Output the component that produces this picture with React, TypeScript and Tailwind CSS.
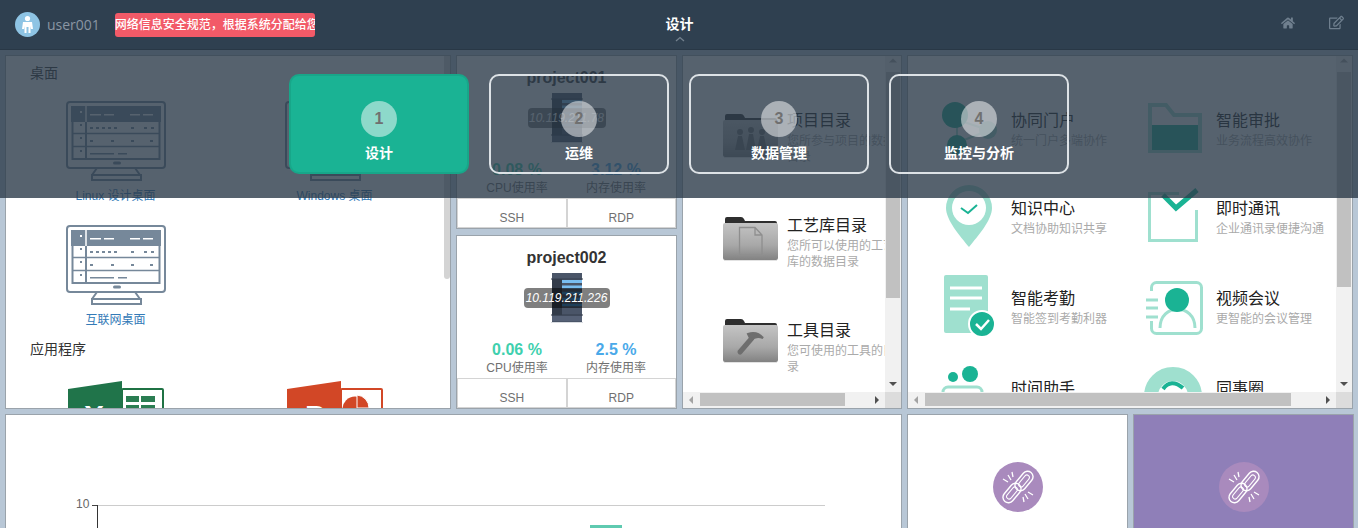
import React from "react";
import { FaHome, FaRegEdit } from "react-icons/fa";

const LIGHT = "#9fe0cf";
const DARK = "#1ab394";

function Monitor() {
  const c = "#76889a";
  return (
    <svg width="100" height="80" viewBox="0 0 100 80" className="block mx-auto">
      <rect x="1" y="1" width="98" height="66" rx="3" fill="#fff" stroke={c} strokeWidth="2" />
      <rect x="5" y="5" width="90" height="16" fill={c} />
      <rect x="6.5" y="20" width="87" height="38" fill="none" stroke={c} strokeWidth="2" />
      <path d="M6 32.5H94M6 45.5H94" stroke={c} strokeWidth="1.6" />
      <path d="M20 21V58" stroke={c} strokeWidth="2" />
      <path d="M20 5V21" stroke="#fff" strokeWidth="1.5" />
      <path d="M24 13.7H35M38 13.7H48M64 13.7H74M77 13.7H87" stroke="#fff" strokeWidth="1.5" />
      <path d="M14 24h2M14 37h2M14 50h2" stroke={c} strokeWidth="2" />
      <path d="M14 11h2" stroke="#fff" strokeWidth="2" />
      <path d="M24 27h3M30 27h3M36 27h3M42 27h3M48 27h3M65 27h3M78 27h3M85 27h3M24 40h3M45 40h3M65 40h3M84 40h3" stroke={c} strokeWidth="2" />
      <path d="M24 52.7H48M52 52.7H61" stroke={c} strokeWidth="1.5" />
      <rect x="47" y="60.5" width="8" height="3" rx="1.5" fill={c} />
      <path d="M31 67L26 74M69 67L74 74" stroke={c} strokeWidth="2" />
      <rect x="26" y="74" width="49" height="5" fill="none" stroke={c} strokeWidth="2" />
    </svg>
  );
}

function Excel() {
  return (
    <svg width="100" height="60" viewBox="0 0 100 60" className="block mx-auto">
      <rect x="56" y="8" width="41" height="52" rx="1" fill="#fff" stroke="#1f7244" strokeWidth="2" />
      <path d="M60 15h13v6H60zM75 15h14v6H75zM60 24h13v8H60zM75 24h14v8H75z" fill="#2b7d52" />
      <path d="M2 8L56 0V60H2Z" fill="#20744a" />
      <text x="28" y="45" fontFamily="Liberation Sans" fontWeight="700" fontSize="30" fill="#fff" textAnchor="middle">X</text>
    </svg>
  );
}

function Ppt() {
  return (
    <svg width="100" height="60" viewBox="0 0 100 60" className="block mx-auto">
      <rect x="56" y="8" width="41" height="52" rx="1" fill="#fff" stroke="#d24726" strokeWidth="2" />
      <circle cx="70" cy="28" r="12.5" fill="#d24726" />
      <path d="M72 14a13 13 0 0 1 12 13H72Z" fill="#d24726" stroke="#fff" strokeWidth="1" />
      <path d="M2 8L56 0V60H2Z" fill="#d24726" />
      <text x="30" y="45" fontFamily="Liberation Sans" fontWeight="700" fontSize="30" fill="#fff" textAnchor="middle">P</text>
    </svg>
  );
}

function Server() {
  return (
    <svg width="32" height="51" viewBox="0 0 32 51" className="block">
      <rect x="1" y="0" width="30" height="49" fill="#4a5568" />
      <path d="M0 6h32M0 42h32" stroke="#343e4d" strokeWidth="1" />
      <rect x="1" y="6" width="10" height="36" fill="#333c4a" />
      <path d="M11 8.5h20M11 14h20" stroke="#79bdf0" strokeWidth="3" />
      <path d="M11 20h20M11 26h20M11 32h20" stroke="#3d7fb2" strokeWidth="2.5" />
      <rect x="1" y="43" width="30" height="5" fill="#566176" />
      <path d="M0 49.5h32" stroke="#d8dbe0" strokeWidth="1" />
    </svg>
  );
}

function Card({ name, ip, cpu, mem, pill }: { name: string; ip: string; cpu: string; mem: string; pill: string }) {
  return (
    <div className="flex-1 flex flex-col bg-white border border-[#9aa3ab] overflow-hidden">
      <div className="pt-[12px] text-center text-[16px] leading-[20px] font-bold text-[#333]">{name}</div>
      <div className="relative mt-[5px] h-[50px] flex justify-center">
        <Server />
        <div className="absolute inset-0 flex items-center justify-center">
          <span className={`${pill} h-[20px] rounded-[4px] bg-black/50 text-white italic text-[12px] leading-[20px] text-center`}>{ip}</span>
        </div>
      </div>
      <div className="mt-[17px] w-[198px] mx-auto grid grid-cols-2 text-center">
        <div className="text-[16px] leading-[20px] font-bold text-[#3fd0ae]">{cpu}</div>
        <div className="text-[16px] leading-[20px] font-bold text-[#4aa9e9]">{mem}</div>
        <div className="text-[12px] leading-[16px] text-[#707070]">CPU使用率</div>
        <div className="text-[12px] leading-[16px] text-[#707070]">内存使用率</div>
      </div>
      <div className="mt-[2px] flex-1 flex text-[12px] leading-[18px] text-[#707070] text-center border border-[#d4d4d4]">
        <div className="flex-1 flex items-end justify-center border-r-2 border-[#d4d4d4]">SSH</div>
        <div className="flex-1 flex items-end justify-center">RDP</div>
      </div>
    </div>
  );
}

function Arrow({ dir }: { dir: "up" | "down" | "left" | "right" }) {
  const d = { up: "M4 6.5H12L8 2.5Z", down: "M4 6H12L8 10Z", left: "M10 4V12L6 8Z", right: "M6 4V12L10 8Z" }[dir];
  const fill = dir === "up" || dir === "left" ? "#a3a3a3" : "#505050";
  return (
    <svg width="16" height="16" viewBox="0 0 16 16" className="block shrink-0">
      <path d={d} fill={fill} />
    </svg>
  );
}

function Scrolled({ children, vThumb, hThumb }: { children: React.ReactNode; vThumb: string; hThumb: string }) {
  return (
    <div className="flex-1 min-w-0 bg-white border border-[#9aa3ab] flex flex-col overflow-hidden">
      <div className="flex-1 min-h-0 flex">
        <div className="flex-1 min-w-0 overflow-hidden">{children}</div>
        <div className="w-[16px] shrink-0 bg-[#f1f1f1] flex flex-col">
          <Arrow dir="up" />
          <div className="flex-1 min-h-0">
            <div className={`${vThumb} mx-[1px] bg-[#c1c1c1]`} />
          </div>
          <Arrow dir="down" />
        </div>
      </div>
      <div className="h-[16px] shrink-0 flex bg-[#f1f1f1]">
        <Arrow dir="left" />
        <div className="flex-1 min-w-0 pt-[1px]">
          <div className={`${hThumb} h-[13px] bg-[#c1c1c1]`} />
        </div>
        <Arrow dir="right" />
        <div className="w-[16px] bg-[#dcdcdc]" />
      </div>
    </div>
  );
}

function Folder({ glyph }: { glyph: "people" | "doc" | "hammer" }) {
  const id = `f-${glyph}`;
  return (
    <svg width="55" height="46" viewBox="0 0 55 46" className="block shrink-0">
      <defs>
        <linearGradient id={id} x1="0" y1="0" x2="0" y2="1">
          <stop offset="0" stopColor="#c4c4c4" />
          <stop offset="0.6" stopColor="#a8a8a8" />
          <stop offset="1" stopColor="#828282" />
        </linearGradient>
      </defs>
      <path d="M2 8V3q0-2 2-2h14q2 0 3 2l1 2h30q2 0 2 2v3H2Z" fill="#2e2e2e" />
      <path d="M2 7h51q2 0 2 2v33q0 2-2 2H2q-2 0-2-2V9q0-2 2-2Z" fill={`url(#${id})`} />
      <path d="M1 44.5H54" stroke="#e2e2e2" strokeWidth="1" />
      {glyph === "hammer" && (
        <g fill="none" stroke="#6e6e6e" strokeLinecap="round">
          <path d="M17 34L29 20" strokeWidth="5" />
          <path d="M25 16Q34 13 40 20Q33 17 28 22Z" fill="#6e6e6e" strokeWidth="2" />
        </g>
      )}
      {glyph === "doc" && (
        <path d="M16.5 11.5H32L39 19V39H16.5Z M32 11.5V19H39" fill="none" stroke="#8e8e8e" strokeWidth="1.3" />
      )}
      {glyph === "people" && (
        <g fill="#6f6f6f">
          <circle cx="17" cy="19" r="3" />
          <path d="M12 37l3-14h4l3 14z" />
          <circle cx="28" cy="17" r="3" />
          <path d="M23 37l3-16h4l3 16z" />
          <circle cx="39" cy="19" r="3" />
          <path d="M34 37l3-14h4l3 14z" />
        </g>
      )}
    </svg>
  );
}

function FolderRow({ glyph, title, desc, iconCls }: { glyph: "people" | "doc" | "hammer"; title: string; desc: string; iconCls: string }) {
  return (
    <div className="h-[105px] flex items-start pl-[40px] w-[320px]">
      <div className={iconCls}>
        <Folder glyph={glyph} />
      </div>
      <div className="ml-[9px] w-[108px] pt-[1px]">
        <div className="text-[16px] leading-[20px] text-[#222] whitespace-nowrap">{title}</div>
        <div className="mt-[2px] text-[12px] leading-[16px] text-[#aaa] break-all">{desc}</div>
      </div>
    </div>
  );
}

function Ic1() {
  return (
    <svg width="60" height="60" viewBox="0 0 60 60" className="block overflow-visible">
      <path d="M17 25V40M24 22L42 28M24 40L42 33" stroke={LIGHT} strokeWidth="2" />
      <circle cx="15" cy="15" r="13" fill={DARK} />
      <circle cx="17" cy="45" r="10" fill={DARK} />
      <circle cx="48" cy="30" r="9" fill={LIGHT} />
    </svg>
  );
}
function Ic2() {
  return (
    <svg width="60" height="60" viewBox="0 0 60 60" className="block overflow-visible">
      <path d="M5 5H21L29 15H55V51H5Z" fill="#fff" stroke={LIGHT} strokeWidth="4" />
      <rect x="7" y="25" width="46" height="25" fill={DARK} />
    </svg>
  );
}
function Ic3() {
  return (
    <svg width="60" height="60" viewBox="0 0 60 60" className="block overflow-visible">
      <path d="M29 -3A23 23 0 0 1 52 20C52 32 38 48 29 59C20 48 6 32 6 20A23 23 0 0 1 29 -3Z" fill={LIGHT} />
      <circle cx="29" cy="20" r="17" fill="#fff" />
      <path d="M21 20L28 25L37 17" fill="none" stroke={DARK} strokeWidth="2" />
    </svg>
  );
}
function Ic4() {
  return (
    <svg width="60" height="60" viewBox="0 0 60 60" className="block overflow-visible">
      <path d="M34 5.5H4.5V52.5H51.5V22" fill="none" stroke={LIGHT} strokeWidth="3" />
      <path d="M18 7L31 20L52 2" fill="none" stroke={DARK} strokeWidth="5" />
    </svg>
  );
}
function Ic5() {
  return (
    <svg width="60" height="60" viewBox="0 0 60 60" className="block overflow-visible">
      <rect x="4" y="-3" width="44" height="58" rx="2" fill={LIGHT} />
      <path d="M10 10H42M10 20H42M10 31H30" stroke="#fff" strokeWidth="3" />
      <circle cx="42" cy="46" r="13" fill={DARK} stroke="#fff" strokeWidth="2" />
      <path d="M36 46L41 51L49 42" fill="none" stroke="#fff" strokeWidth="2.5" />
    </svg>
  );
}
function Ic6() {
  return (
    <svg width="60" height="60" viewBox="0 0 60 60" className="block overflow-visible">
      <rect x="6.5" y="4.5" width="50" height="51" rx="5" fill="#fff" stroke={LIGHT} strokeWidth="3" />
      <rect x="3" y="13" width="8" height="30" fill="#fff" />
      <path d="M1 22H13M1 30H13M1 39H13" stroke={LIGHT} strokeWidth="3" />
      <path d="M15 50C15 25 50 25 50 50" fill="#fff" stroke={LIGHT} strokeWidth="3" />
      <circle cx="32" cy="22" r="12" fill={DARK} />
    </svg>
  );
}
function Ic7() {
  return (
    <svg width="60" height="60" viewBox="0 0 60 60" className="block overflow-visible">
      <circle cx="13" cy="9" r="5" fill={DARK} />
      <circle cx="30" cy="6" r="8" fill={DARK} />
      <rect x="3" y="19" width="39" height="30" rx="5" fill="none" stroke={LIGHT} strokeWidth="3" />
    </svg>
  );
}
function Ic8() {
  return (
    <svg width="60" height="60" viewBox="0 0 60 60" className="block overflow-visible">
      <circle cx="28" cy="28" r="22" fill="none" stroke={LIGHT} strokeWidth="14" />
      <path d="M18 21Q26 10 38 20" fill="none" stroke={DARK} strokeWidth="4" />
    </svg>
  );
}

function AppItem({ icon, title, desc }: { icon: React.ReactNode; title: string; desc: string }) {
  return (
    <div className="flex items-start">
      <div className="w-[60px] h-[60px] -mt-[10px] shrink-0">{icon}</div>
      <div className="ml-[11px] pt-[1px] whitespace-nowrap">
        <div className="text-[16px] leading-[20px] text-[#222]">{title}</div>
        <div className="text-[12px] leading-[18px] mt-[1px] text-[#aaa]">{desc}</div>
      </div>
    </div>
  );
}

function Chain() {
  return (
    <svg width="50" height="50" viewBox="0 0 50 50" className="block">
      <circle cx="25" cy="25" r="25" fill="#a98abd" />
      <g fill="none" stroke="#fff">
        <rect x="20" y="13.5" width="22" height="11" rx="5.5" strokeWidth="1.4" transform="rotate(-50 31 19)" />
        <rect x="8" y="25.5" width="22" height="11" rx="5.5" strokeWidth="1.4" transform="rotate(-50 19 31)" />
        <rect x="24" y="16.5" width="14" height="5" rx="2.5" strokeWidth="1" transform="rotate(-50 31 19)" />
        <rect x="12" y="28.5" width="14" height="5" rx="2.5" strokeWidth="1" transform="rotate(-50 19 31)" />
        <path d="M10 17L15 20M15 13L18 18M19 10L20 15M40 33L35 30M35 37L32 32M31 40L30 35" strokeWidth="1.3" />
      </g>
    </svg>
  );
}

function Step({ n, label, active }: { n: number; label: string; active?: boolean }) {
  return (
    <div className={`w-[180px] h-[100px] rounded-[10px] border-2 flex flex-col items-center pt-[25px] ${active ? "bg-[#1ab394] border-[#18a689]" : "border-[#dde2e6]"}`}>
      <div className="w-[36px] h-[36px] rounded-full bg-white/50 flex items-center justify-center text-[16px] font-bold text-[#707070]">{n}</div>
      <div className="mt-[6px] text-[14px] leading-[20px] font-bold text-white">{label}</div>
    </div>
  );
}

export default function App() {
  return (
    <div className="relative w-full h-[528px] overflow-hidden bg-[#b8c7d6] font-['Liberation_Sans','Noto_Sans_CJK_SC',sans-serif]">
      <header className="h-[50px] flex items-center bg-[#2f4050] border-b border-[#293846]">
        <div className="flex-1 flex items-center pl-[15px]">
          <svg width="25" height="25" viewBox="0 0 25 25" className="block">
            <circle cx="12.5" cy="12.5" r="12.5" fill="#8ec4e4" />
            <circle cx="12.5" cy="6.5" r="2.6" fill="#fff" />
            <path d="M8 10h9l1 7h-2l-.5-3V21h-2v-6h-2v6h-2v-7l-.5 3H7Z" fill="#fff" />
          </svg>
          <span className="ml-[7px] font-['Open_Sans','Noto_Sans_CJK_SC',sans-serif] text-[14px] text-[#8a96a3]">user001</span>
          <div className="ml-[15px] w-[200px] h-[24px] rounded-[3px] bg-[#f25a68] overflow-hidden whitespace-nowrap text-[12px] leading-[24px] font-medium text-white">
            网络信息安全规范，根据系统分配给您的账号
          </div>
        </div>
        <div className="relative text-[14px] font-bold text-white -mt-[1px]">
          设计
          <svg width="12" height="6" viewBox="0 0 12 6" className="absolute left-[8px] top-[22px]">
            <path d="M2 5L6 1.5L10 5" fill="none" stroke="#73818e" strokeWidth="1.3" />
          </svg>
        </div>
        <div className="flex-1 flex items-center justify-end pr-[14px] gap-[34px] text-[#6f7f8e] -mt-[4px]">
          <FaHome className="w-[14px] h-[14px]" />
          <FaRegEdit className="w-[15px] h-[15px]" />
        </div>
      </header>

      <main className="px-[5px] pt-[5px] flex flex-col gap-[5px]">
        <div className="h-[354px] flex gap-[5px]">
          {/* 桌面 */}
          <div className="w-[446px] shrink-0 bg-white border border-[#9aa3ab] flex overflow-hidden">
            <div className="flex-1 min-w-0 overflow-hidden pt-[7px]">
              <div className="pl-[24px] text-[14px] leading-[20px] text-[#333]">桌面</div>
              <div className="mt-[18px] grid grid-cols-2 gap-y-[20px]">
                <div className="text-center">
                  <Monitor />
                  <div className="mt-[6px] text-[12px] leading-[18px] text-[#337ab7]">Linux 设计桌面</div>
                </div>
                <div className="text-center">
                  <Monitor />
                  <div className="mt-[6px] text-[12px] leading-[18px] text-[#337ab7]">Windows 桌面</div>
                </div>
                <div className="text-center">
                  <Monitor />
                  <div className="mt-[6px] text-[12px] leading-[18px] text-[#337ab7]">互联网桌面</div>
                </div>
              </div>
              <div className="mt-[10px] pl-[24px] text-[14px] leading-[20px] text-[#333]">应用程序</div>
              <div className="mt-[22px] grid grid-cols-2">
                <Excel />
                <Ppt />
              </div>
            </div>
            <div className="w-[6px] h-[223px] bg-[#d4d4d4] rounded-b-[3px] shrink-0" />
          </div>

          {/* 项目 */}
          <div className="w-[221px] shrink-0 flex flex-col gap-[6px]">
            <Card name="project001" ip="10.119.211.78" cpu="0.08 %" mem="3.12 %" pill="w-[78px]" />
            <Card name="project002" ip="10.119.211.226" cpu="0.06 %" mem="2.5 %" pill="w-[86px]" />
          </div>

          {/* 目录 */}
          <div className="w-[220px] shrink-0 flex">
            <Scrolled vThumb="h-[226px]" hThumb="w-[145px] ml-[1px]">
              <div className="pt-[54px]">
                <FolderRow glyph="people" title="项目目录" desc="您所参与项目的数据目录" iconCls="mt-[3px]" />
                <FolderRow glyph="doc" title="工艺库目录" desc="您所可以使用的工艺库的数据目录" iconCls="mt-[1px]" />
                <FolderRow glyph="hammer" title="工具目录" desc="您可使用的工具的目录" iconCls="-mt-[2px]" />
              </div>
            </Scrolled>
          </div>

          {/* 应用 */}
          <div className="w-[446px] shrink-0 flex">
            <Scrolled vThumb="h-[215px]" hThumb="w-[366px] ml-[1px]">
              <div className="pt-[54px] pl-[32px] w-[460px] grid grid-cols-[205px_205px] grid-rows-[88px_90px_90px_90px]">
                <AppItem icon={<Ic1 />} title="协同门户" desc="统一门户多端协作" />
                <AppItem icon={<Ic2 />} title="智能审批" desc="业务流程高效协作" />
                <AppItem icon={<Ic3 />} title="知识中心" desc="文档协助知识共享" />
                <AppItem icon={<Ic4 />} title="即时通讯" desc="企业通讯录便捷沟通" />
                <AppItem icon={<Ic5 />} title="智能考勤" desc="智能签到考勤利器" />
                <AppItem icon={<Ic6 />} title="视频会议" desc="更智能的会议管理" />
                <AppItem icon={<Ic7 />} title="时间助手" desc="高效管理时间" />
                <AppItem icon={<Ic8 />} title="同事圈" desc="同事交流分享" />
              </div>
            </Scrolled>
          </div>
        </div>

        <div className="h-[200px] flex gap-[5px]">
          <div className="w-[897px] shrink-0 bg-white border border-[#9aa3ab]">
            <svg width="895" height="198" viewBox="0 0 895 198" className="block">
              <text x="70" y="93" textAnchor="start" fontFamily="Liberation Sans" fontSize="12" fill="#666">10</text>
              <path d="M86 90.5H91" stroke="#444" />
              <path d="M91 90.5H819" stroke="#ccc" />
              <path d="M91.5 90V198" stroke="#333" />
              <rect x="584" y="110" width="32" height="90" fill="#5fcab0" />
            </svg>
          </div>
          <div className="w-[221px] shrink-0 bg-white border border-[#9aa3ab] flex justify-center pt-[47px]">
            <Chain />
          </div>
          <div className="w-[221px] shrink-0 bg-[#8f7fb8] border border-[#9aa3ab] flex justify-center pt-[47px]">
            <Chain />
          </div>
        </div>
      </main>

      <div className="absolute left-0 right-0 top-[50px] h-[148px] bg-[#2c3b4a]/80 flex justify-center gap-[20px] pt-[24px]">
        <Step n={1} label="设计" active />
        <Step n={2} label="运维" />
        <Step n={3} label="数据管理" />
        <Step n={4} label="监控与分析" />
      </div>
    </div>
  );
}
